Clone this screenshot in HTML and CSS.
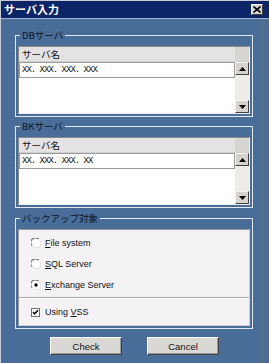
FILE: index.html
```html
<!DOCTYPE html>
<html lang="ja">
<head>
<meta charset="utf-8">
<title>サーバ入力</title>
<link rel="stylesheet" href="styles.css">
</head>
<body>
<div class="window">
  <div class="titlebar">
    <span class="title">サーバ入力</span>
    <span class="close"><svg width="8" height="7" viewBox="0 0 8 7"><path d="M0.5 0.5 L7.5 6.5 M7.5 0.5 L0.5 6.5" stroke="#000" stroke-width="1.6"/></svg></span>
  </div>
  <div class="body">
    <fieldset class="group">
      <legend>DBサーバ</legend>
      <div class="list">
        <div class="list-main">
          <div class="list-header">サーバ名</div>
          <div class="list-row">XX. XXX. XXX. XXX</div>
        </div>
        <div class="scroll">
          <div class="corner"></div>
          <div class="sbtn"><svg width="7" height="4" viewBox="0 0 7 4"><path d="M3.5 0 L7 4 L0 4 Z" fill="#000"/></svg></div>
          <div class="track"></div>
          <div class="sbtn"><svg width="7" height="4" viewBox="0 0 7 4"><path d="M0 0 L7 0 L3.5 4 Z" fill="#000"/></svg></div>
        </div>
      </div>
    </fieldset>
    <fieldset class="group">
      <legend>BKサーバ</legend>
      <div class="list">
        <div class="list-main">
          <div class="list-header">サーバ名</div>
          <div class="list-row">XX. XXX. XXX. XX</div>
        </div>
        <div class="scroll">
          <div class="corner"></div>
          <div class="sbtn"><svg width="7" height="4" viewBox="0 0 7 4"><path d="M3.5 0 L7 4 L0 4 Z" fill="#000"/></svg></div>
          <div class="track"></div>
          <div class="sbtn"><svg width="7" height="4" viewBox="0 0 7 4"><path d="M0 0 L7 0 L3.5 4 Z" fill="#000"/></svg></div>
        </div>
      </div>
    </fieldset>
    <fieldset class="group backup">
      <legend>バックアップ対象</legend>
      <div class="panel">
        <div class="radios">
          <div class="opt">
            <svg class="radio" width="10" height="10" viewBox="0 0 10 10"><circle cx="5" cy="5" r="4.5" fill="#fff"/><path d="M1.2 7.6 A4.5 4.5 0 0 1 7.6 1.2" fill="none" stroke="#707070" stroke-width="1.2"/><path d="M2.4 8.8 A4.5 4.5 0 0 0 8.8 2.4" fill="none" stroke="#d8d8d8" stroke-width="1"/></svg>
            <span><u>F</u>ile system</span>
          </div>
          <div class="opt">
            <svg class="radio" width="10" height="10" viewBox="0 0 10 10"><circle cx="5" cy="5" r="4.5" fill="#fff"/><path d="M1.2 7.6 A4.5 4.5 0 0 1 7.6 1.2" fill="none" stroke="#707070" stroke-width="1.2"/><path d="M2.4 8.8 A4.5 4.5 0 0 0 8.8 2.4" fill="none" stroke="#d8d8d8" stroke-width="1"/></svg>
            <span><u>S</u>QL Server</span>
          </div>
          <div class="opt">
            <svg class="radio" width="10" height="10" viewBox="0 0 10 10"><circle cx="5" cy="5" r="4.5" fill="#fff"/><path d="M1.2 7.6 A4.5 4.5 0 0 1 7.6 1.2" fill="none" stroke="#707070" stroke-width="1.2"/><path d="M2.4 8.8 A4.5 4.5 0 0 0 8.8 2.4" fill="none" stroke="#d8d8d8" stroke-width="1"/><circle cx="5" cy="5" r="1.7" fill="#000"/></svg>
            <span><u>E</u>xchange Server</span>
          </div>
        </div>
        <div class="check-row">
          <svg class="checkbox" width="9" height="9" viewBox="0 0 9 9"><rect x="0.5" y="0.5" width="8" height="8" fill="#fff" stroke="#707070"/><path d="M2 4 L3.6 5.8 L7 2.2" fill="none" stroke="#000" stroke-width="1.5"/></svg>
          <span>Using <u>V</u>SS</span>
        </div>
      </div>
    </fieldset>
    <div class="buttons">
      <button class="btn">Check</button>
      <button class="btn">Cancel</button>
    </div>
  </div>
</div>
</body>
</html>
```
FILE: styles.css
```css
* { box-sizing: border-box; }
html, body { margin: 0; padding: 0; }
body {
  width: 269px;
  height: 363px;
  overflow: hidden;
  font-family: "Liberation Sans", "Noto Sans CJK JP", sans-serif;
  background: #4a6e9a;
}
.window {
  width: 269px;
  height: 363px;
  display: flex;
  flex-direction: column;
  border-top: 1px solid #c8ccd2;
  border-left: 1px solid #c8ccd2;
}
.titlebar {
  height: 18px;
  flex: none;
  background: #0b2568;
  border-bottom: 1px solid #a3b4c8;
  display: flex;
  align-items: center;
  justify-content: space-between;
  padding: 0 6px 0 3px;
}
.title {
  color: #fff;
  font: bold 11px/1 "Noto Sans CJK JP", sans-serif;
}
.close {
  width: 12px;
  height: 11px;
  background: #d8d6d0;
  border: 1px solid;
  border-color: #fff #404040 #404040 #fff;
  display: flex;
  align-items: center;
  justify-content: center;
}
.body {
  flex: 1;
  padding: 10px 0 0 14px;
  display: flex;
  flex-direction: column;
  background:
    linear-gradient(to right, transparent 261px, #5c6b80 261px, #5c6b80 263px, transparent 263px),
    repeating-linear-gradient(to bottom, #4b6f9b 0, #4b6f9b 1px, #476a97 1px, #476a97 2px);
}
.group {
  width: 238px;
  margin: 0 0 3px 0;
  padding: 0 2px 2px 2px;
  border: 1px solid #e4e8ee;
  min-width: 0;
}
legend {
  font: 9.5px/12px "Noto Sans CJK JP", sans-serif;
  color: #0d1525;
  padding: 0 2px;
  margin-left: 2px;
}
.list {
  margin-top: 5px;
  height: 68px;
  display: flex;
  background: #fff;
  border: 1px solid;
  border-color: #8a8a8a #f0f0f0 #f0f0f0 #8a8a8a;
}
.list-main { flex: 1; display: flex; flex-direction: column; }
.list-header {
  height: 15px;
  background: #e3e3e3;
  border-bottom: 1px solid #cfcfcf;
  font: 9.5px/15px "Noto Sans CJK JP", sans-serif;
  color: #111;
  padding-left: 3px;
}
.list-row {
  height: 16px;
  border: 1px solid #9c9c9c;
  background: #fff;
  font: 9px/14px "Liberation Mono", monospace;
  letter-spacing: -1px;
  color: #111;
  padding-left: 2px;
}
.scroll {
  width: 14px;
  display: flex;
  flex-direction: column;
  background: #eeece8;
}
.corner {
  height: 15px;
  background: #d7d5d1;
  border-bottom: 1px solid #cfcfcf;
}
.sbtn {
  height: 13px;
  background: #d6d3ce;
  border: 1px solid;
  border-color: #f4f4f4 #404040 #404040 #f4f4f4;
  display: flex;
  align-items: center;
  justify-content: center;
}
.track { flex: 1; }
.backup { margin-top: 1px; }
.panel {
  margin-top: 5px;
  background: #f5f2f5;
  border: 1px solid;
  border-color: #9a9a9a #d0d0d0 #d0d0d0 #9a9a9a;
  height: 97px;
  display: flex;
  flex-direction: column;
}
.radios {
  padding: 2px 0 2px 12px;
  border-bottom: 1px solid #a8a8a8;
}
.opt, .check-row {
  height: 21px;
  display: flex;
  align-items: center;
  gap: 4px;
  font-size: 9px;
  color: #111;
}
.check-row {
  flex: 1;
  padding-left: 12px;
  gap: 5px;
  border-top: 1px solid #fff;
}
.buttons {
  display: flex;
  gap: 25px;
  padding-left: 35px;
  margin-top: 5px;
}
.btn {
  width: 72px;
  height: 18px;
  padding: 0;
  font: 9.5px "Liberation Sans", sans-serif;
  color: #111;
  background: #dad8d4;
  border: 1px solid;
  border-color: #fff #404040 #404040 #fff;
  box-shadow: inset -1px -1px 0 #9a9a9a;
}
```
